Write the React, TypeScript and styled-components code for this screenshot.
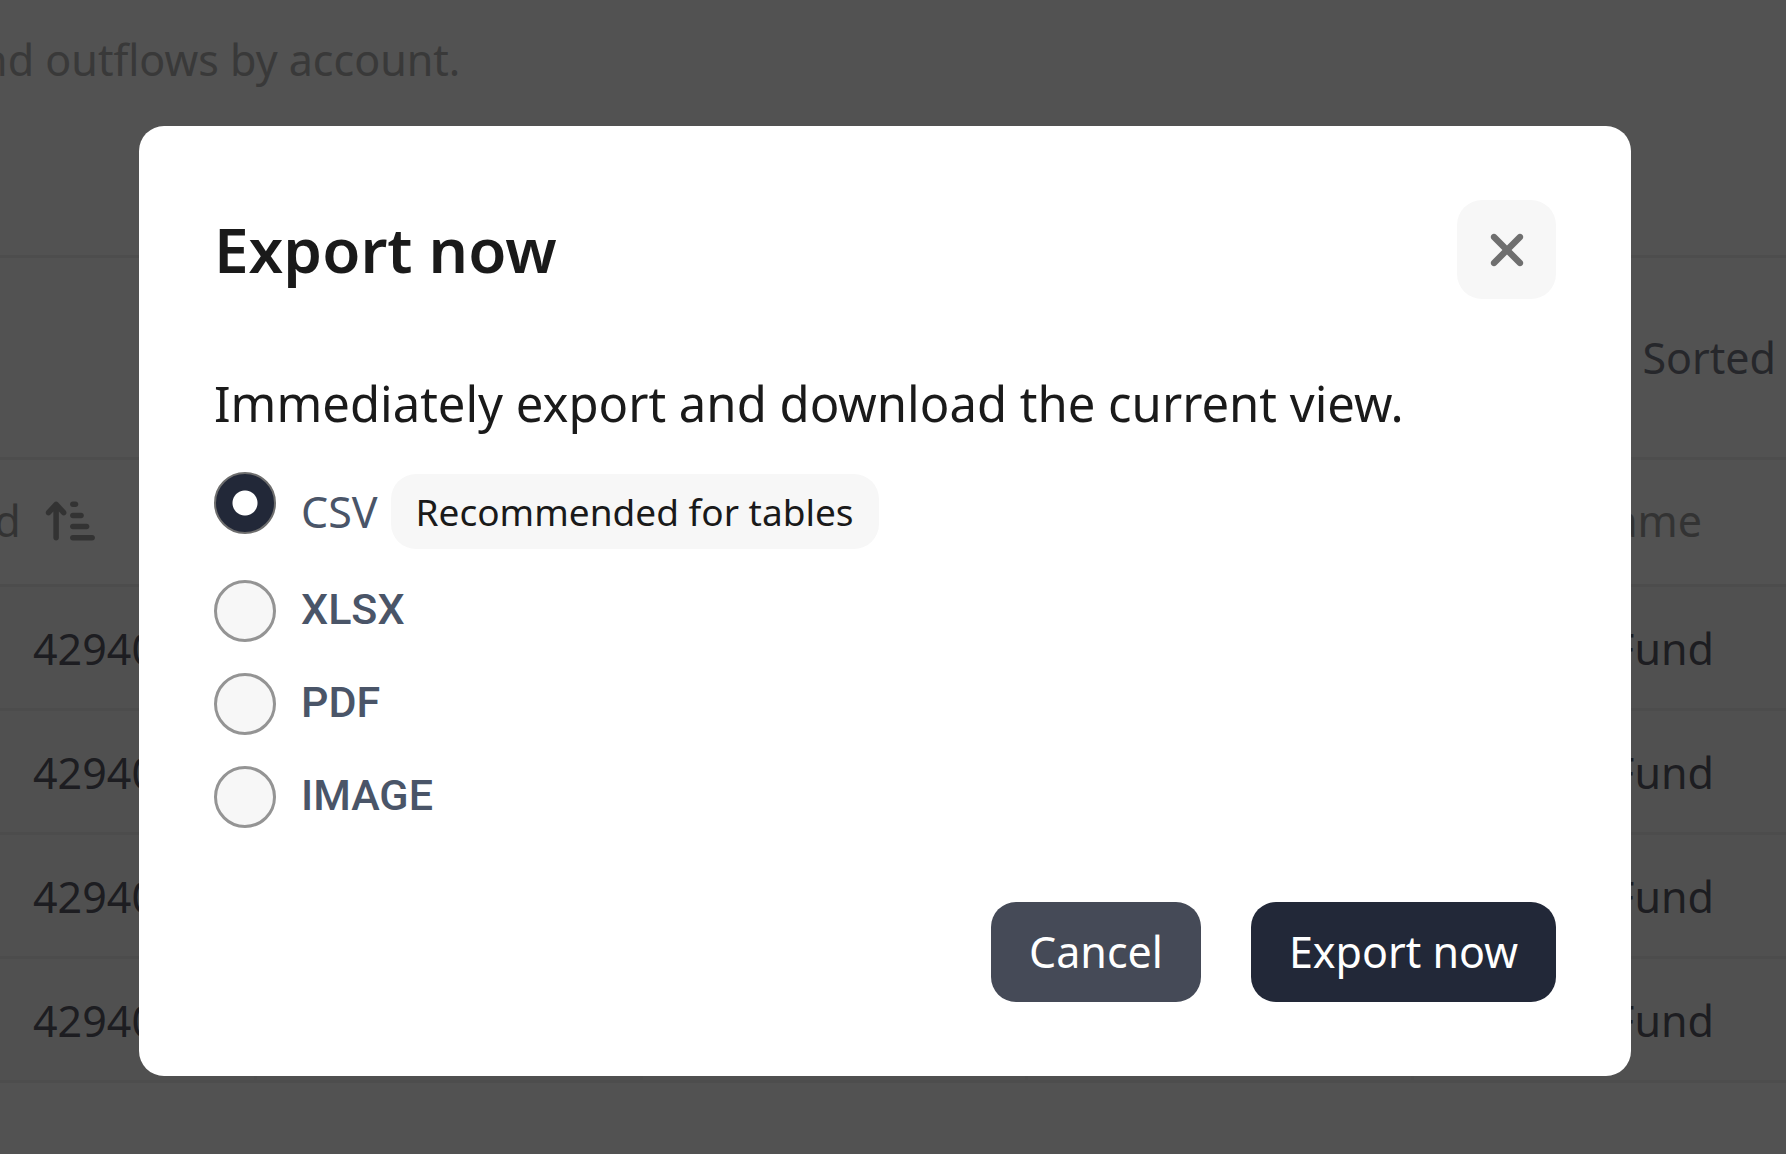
import React, { useState } from "react";
import styled, { createGlobalStyle, css } from "styled-components";
import { FaArrowUpShortWide, FaXmark } from "react-icons/fa6";

const GlobalStyle = createGlobalStyle`
  *, *::before, *::after { box-sizing: border-box; }
  body {
    margin: 0;
    background: #fdfdfd;
    font-family: "Noto Sans", "Open Sans", sans-serif;
    font-size: 43px;
    line-height: 62px;
    overflow: hidden;
  }
`;

const Page = styled.main`
  min-height: 100vh;
  overflow: hidden;
`;

const Summary = styled.header`
  display: flex;
  height: 255px;
  margin-left: -43px;
  padding-top: 29px;
  white-space: nowrap;
  color: #b0b0b0;
`;

const SummaryText = styled.p`
  margin: 0;
`;

const Toolbar = styled.div`
  display: flex;
  align-items: center;
  justify-content: flex-end;
  height: 202px;
  padding-right: 10px;
  border-top: 3px solid #f0f0f0;
  color: #787a86;
`;

const DataTable = styled.table`
  width: calc(100% + 143px);
  margin-left: -129px;
  table-layout: fixed;
  border-collapse: separate;
  border-spacing: 0;
  border-bottom: 3px solid #eeeeee;
`;

const HeadCell = styled.th<{ $end?: boolean }>`
  height: 127px;
  padding: 0 98px 2px 0;
  border-top: 3px solid #eeeeee;
  font-weight: 400;
  text-align: ${(p) => (p.$end ? "right" : "left")};
  color: #a0a0a0;
`;

const SortLabel = styled.span`
  display: flex;
  align-items: center;
  justify-content: flex-end;
  gap: 24px;
  margin-right: 64px;
`;

const Cell = styled.td<{ $end?: boolean }>`
  height: 124px;
  padding: 2px 0 0 162px;
  border-top: 3px solid #ececec;
  border-right: 3px solid #f2f2f2;
  background: #f9f9f9;
  color: #5a5c68;
  ${(p) =>
    p.$end &&
    css`
      padding: 2px 83px 0 0;
      text-align: right;
    `}
`;

const Backdrop = styled.div`
  position: fixed;
  inset: 0;
  display: flex;
  padding: 126px 155px 78px 139px;
  background: rgba(0, 0, 0, 0.68);
`;

const Dialog = styled.section`
  flex: 1;
  align-self: flex-start;
  padding: 74px 75px;
  border-radius: 25px;
  background: #ffffff;
  color: #1a1a1a;
`;

const DialogHeader = styled.div`
  display: flex;
  align-items: center;
  justify-content: space-between;
  margin-bottom: 67px;
`;

const Title = styled.h2`
  margin: 0;
  font-size: 62px;
  line-height: 75px;
  font-weight: 600;
`;

const CloseButton = styled.button`
  display: grid;
  place-items: center;
  width: 99px;
  height: 99px;
  padding: 0;
  border: 0;
  border-radius: 25px;
  background: #f7f7f7;
  color: #6f6f6f;
`;

const Intro = styled.p`
  margin: 0 0 31px;
  font-size: 49px;
  line-height: 75px;
`;

const Options = styled.div`
  display: flex;
  flex-direction: column;
  gap: 31px;
  margin-bottom: 74px;
`;

const Option = styled.div`
  display: flex;
  align-items: flex-start;
  gap: 25px;
`;

const Radio = styled.input`
  appearance: none;
  flex: none;
  width: 62px;
  height: 62px;
  margin: 0;
  border: 3px solid #949494;
  border-radius: 50%;
  background: #f7f7f7;

  &:checked {
    border: 2px solid #6e6e6e;
    background: radial-gradient(circle, #ffffff 12px, #222838 13px);
  }
`;

const OptionLabel = styled.label<{ $plain?: boolean }>`
  display: flex;
  align-items: center;
  gap: 13px;
  padding-top: 2px;
  color: #4a5568;
  ${(p) =>
    p.$plain &&
    css`
      padding-top: 0;
      font-family: Roboto, sans-serif;
      font-weight: 500;
      line-height: 58px;
    `}
`;

const Badge = styled.span`
  padding: 0 25px;
  border-radius: 25px;
  background: #f7f7f7;
  color: #1a1a1a;
  font-size: 37px;
  line-height: 75px;
`;

const Actions = styled.div`
  display: flex;
  justify-content: flex-end;
  gap: 50px;
`;

const ActionButton = styled.button<{ $primary?: boolean }>`
  height: 100px;
  padding: 0 38px;
  border: 0;
  border-radius: 25px;
  background: ${(p) => (p.$primary ? "#222838" : "#454a57")};
  color: #ffffff;
  font: inherit;
`;

const formats = [
  { id: "csv", label: "CSV", note: "Recommended for tables" },
  { id: "xlsx", label: "XLSX" },
  { id: "pdf", label: "PDF" },
  { id: "image", label: "IMAGE" },
];

const rows = [1, 2, 3, 4];

export default function App() {
  const [format, setFormat] = useState("csv");

  return (
    <>
      <GlobalStyle />
      <Page>
        <Summary>
          <SummaryText>and outflows by account.</SummaryText>
        </Summary>
        <Toolbar>Sorted</Toolbar>
        <DataTable>
          <thead>
            <tr>
              <HeadCell>
                <SortLabel>
                  Id
                  <FaArrowUpShortWide size={50} />
                </SortLabel>
              </HeadCell>
              <HeadCell />
              <HeadCell />
              <HeadCell />
              <HeadCell $end>Name</HeadCell>
            </tr>
          </thead>
          <tbody>
            {rows.map((row) => (
              <tr key={row}>
                <Cell>42940</Cell>
                <Cell />
                <Cell />
                <Cell />
                <Cell $end>Fund</Cell>
              </tr>
            ))}
          </tbody>
        </DataTable>
      </Page>
      <Backdrop>
        <Dialog role="dialog" aria-modal="true" aria-labelledby="export-title">
          <DialogHeader>
            <Title id="export-title">Export now</Title>
            <CloseButton type="button" aria-label="Close">
              <FaXmark size={52} />
            </CloseButton>
          </DialogHeader>
          <Intro>Immediately export and download the current view.</Intro>
          <Options role="radiogroup" aria-labelledby="export-title">
            {formats.map(({ id, label, note }) => (
              <Option key={id}>
                <Radio
                  type="radio"
                  name="format"
                  id={id}
                  checked={format === id}
                  onChange={() => setFormat(id)}
                />
                <OptionLabel htmlFor={id} $plain={!note}>
                  {label}
                  {note && <Badge>{note}</Badge>}
                </OptionLabel>
              </Option>
            ))}
          </Options>
          <Actions>
            <ActionButton type="button">Cancel</ActionButton>
            <ActionButton type="button" $primary>
              Export now
            </ActionButton>
          </Actions>
        </Dialog>
      </Backdrop>
    </>
  );
}
